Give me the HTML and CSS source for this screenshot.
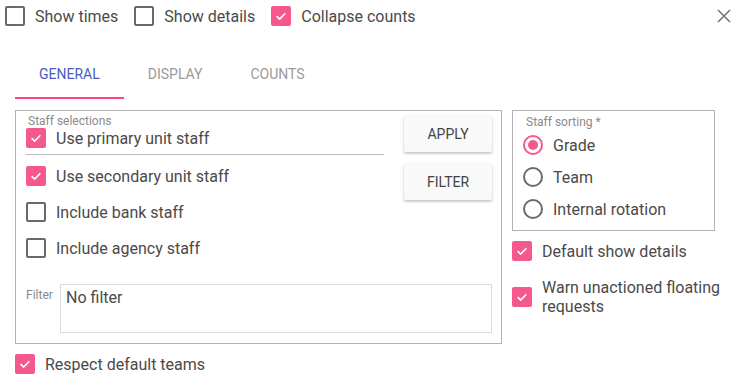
FILE: index.html
```html
<!DOCTYPE html>
<html lang="en">
<head>
    <meta charset="UTF-8">
    <meta name="viewport" content="width=device-width, initial-scale=1.0">
    <title>Staff options</title>
    <link rel="stylesheet" href="styles.css">
</head>
<body>
    <!-- Top toggles -->
    <div class="top-bar">
        <label class="check"><span class="box"></span>Show times</label>
        <label class="check"><span class="box"></span>Show details</label>
        <label class="check"><span class="box on"><svg viewBox="0 0 20 20"><polyline points="4.5,10.2 8.3,13.8 15.5,6.6"/></svg></span>Collapse counts</label>
        <button class="close" title="Close">
            <svg viewBox="0 0 14 14"><path d="M1 1L13 13M13 1L1 13"/></svg>
        </button>
    </div>

    <!-- Tabs -->
    <div class="tabs">
        <div class="tab active">General</div>
        <div class="tab">Display</div>
        <div class="tab">Counts</div>
    </div>

    <div class="content">
        <div class="panel selections">
            <div class="panel-top">
                <div class="sel-list">
                    <div class="panel-label">Staff selections</div>
                    <label class="check first"><span class="box on"><svg viewBox="0 0 20 20"><polyline points="4.5,10.2 8.3,13.8 15.5,6.6"/></svg></span>Use primary unit staff</label>
                    <div class="underline"></div>
                    <label class="check row"><span class="box on"><svg viewBox="0 0 20 20"><polyline points="4.5,10.2 8.3,13.8 15.5,6.6"/></svg></span>Use secondary unit staff</label>
                    <label class="check row"><span class="box"></span>Include bank staff</label>
                    <label class="check row"><span class="box"></span>Include agency staff</label>
                </div>
                <div class="actions">
                    <button class="raised">Apply</button>
                    <button class="raised">Filter</button>
                </div>
            </div>
            <div class="filter-row">
                <span class="filter-label">Filter</span>
                <textarea class="filter-box">No filter</textarea>
            </div>
        </div>

        <div class="side">
            <div class="panel sorting">
                <div class="panel-label">Staff sorting *</div>
                <label class="radio"><span class="circle on"></span>Grade</label>
                <label class="radio"><span class="circle"></span>Team</label>
                <label class="radio"><span class="circle"></span>Internal rotation</label>
            </div>
            <label class="check side-check"><span class="box on"><svg viewBox="0 0 20 20"><polyline points="4.5,10.2 8.3,13.8 15.5,6.6"/></svg></span>Default show details</label>
            <label class="check side-check warn"><span class="box on"><svg viewBox="0 0 20 20"><polyline points="4.5,10.2 8.3,13.8 15.5,6.6"/></svg></span><span class="wrap">Warn unactioned floating requests</span></label>
        </div>
    </div>

    <label class="check respect"><span class="box on"><svg viewBox="0 0 20 20"><polyline points="4.5,10.2 8.3,13.8 15.5,6.6"/></svg></span>Respect default teams</label>
</body>
</html>
```

FILE: styles.css
```css
body {
    font-family: Roboto, "Noto Sans", Arial, sans-serif;
    font-size: 16px;
    color: #4a4a4a;
    margin: 0;
    padding: 0;
    background-color: #fff;
}
.top-bar {
    display: flex;
    align-items: center;
    height: 32px;
    padding-left: 5px;
}
.check {
    display: flex;
    align-items: center;
    line-height: 19px;
}
.top-bar .check {
    margin-right: 16px;
}
.box {
    width: 20px;
    height: 20px;
    box-sizing: border-box;
    border: 2px solid #6a6a6a;
    border-radius: 2px;
    margin-right: 10px;
    flex-shrink: 0;
}
.box.on {
    background-color: #f5588c;
    border-color: #f5588c;
}
.box svg {
    display: block;
    width: 16px;
    height: 16px;
    fill: none;
    stroke: #fff;
    stroke-width: 2;
}
.close {
    margin-left: auto;
    margin-right: 7px;
    width: 16px;
    height: 16px;
    padding: 0;
    border: none;
    background: none;
}
.close svg {
    display: block;
    width: 14px;
    height: 14px;
    fill: none;
    stroke: #777;
    stroke-width: 1.6;
}
.tabs {
    display: flex;
    margin: 19px 0 0 15px;
}
.tab {
    height: 46px;
    padding: 0 24px;
    line-height: 46px;
    font-size: 14px;
    text-transform: uppercase;
    color: #9a9a9a;
    border-bottom: 2px solid transparent;
}
.tab.active {
    color: #4a5bc2;
    border-bottom-color: #ff4081;
}
.content {
    display: flex;
    align-items: flex-start;
    gap: 10px;
    margin-top: 11px;
    padding-left: 15px;
}
.panel {
    border: 1px solid #b3b3b3;
    box-sizing: border-box;
}
.panel-label {
    font-size: 12px;
    line-height: 14px;
    color: #8a8a8a;
}
.selections {
    width: 487px;
    padding: 3px 9px 10px 10px;
}
.panel-top {
    display: flex;
}
.sel-list {
    width: 360px;
}
.sel-list .panel-label {
    margin-left: 2px;
}
.underline {
    margin-top: 6px;
    height: 1px;
    background-color: #bdbdbd;
}
.check.row {
    height: 36px;
}
.underline + .row {
    margin-top: 3px;
}
.actions {
    display: flex;
    flex-direction: column;
    gap: 12px;
    margin: 2px 0 0 20px;
}
.raised {
    width: 88px;
    height: 36px;
    border: none;
    border-radius: 2px;
    background-color: #f9f9f9;
    color: #444;
    font-family: inherit;
    font-size: 14px;
    text-transform: uppercase;
    box-shadow: 0 2px 2px rgba(0, 0, 0, 0.14), 0 1px 4px rgba(0, 0, 0, 0.12);
}
.filter-row {
    display: flex;
    margin-top: 18px;
}
.filter-label {
    width: 34px;
    padding-top: 4px;
    font-size: 12px;
    color: #8a8a8a;
}
.filter-box {
    flex: 1;
    height: 49px;
    box-sizing: border-box;
    margin: 0;
    padding: 3px 5px;
    border: 1px solid #dcdcdc;
    font-family: inherit;
    font-size: 16px;
    color: #4a4a4a;
    resize: none;
}
.side {
    width: 210px;
}
.sorting {
    width: 203px;
    padding: 4px 10px 5px 10px;
}
.sorting .panel-label {
    margin-left: 3px;
}
.radio {
    display: flex;
    align-items: center;
    height: 32px;
}
.circle {
    width: 20px;
    height: 20px;
    box-sizing: border-box;
    border: 2px solid #6a6a6a;
    border-radius: 50%;
    margin-right: 10px;
    display: flex;
    align-items: center;
    justify-content: center;
}
.circle.on {
    border-color: #f5588c;
}
.circle.on::after {
    content: "";
    width: 10px;
    height: 10px;
    border-radius: 50%;
    background-color: #f5588c;
}
.side-check {
    margin-top: 10px;
}
.side-check.warn {
    margin-top: 17px;
}
.wrap {
    width: 180px;
}
.respect {
    margin: 10px 0 0 15px;
}
```
